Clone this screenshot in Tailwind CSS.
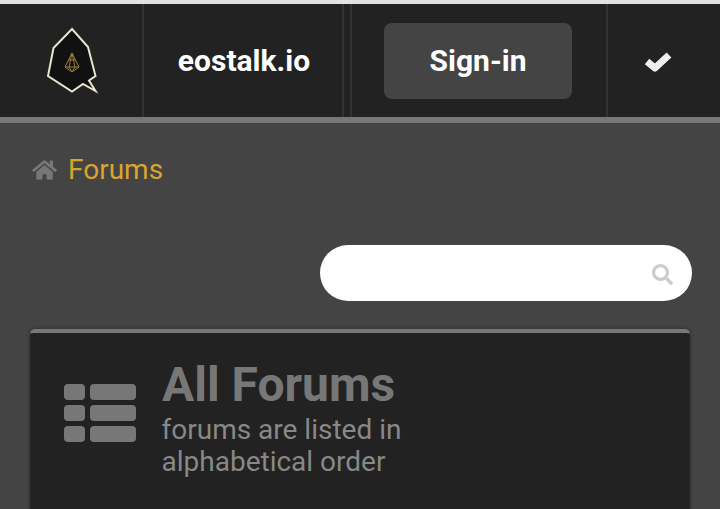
<!DOCTYPE html>
<html lang="en">
  <head>
    <meta charset="UTF-8" />
    <meta name="viewport" content="width=device-width, initial-scale=1.0" />
    <title>eostalk.io</title>
    <script src="https://cdn.jsdelivr.net/npm/@tailwindcss/browser@4"></script>
  </head>
  <body class="bg-[#444444] h-[509px] overflow-hidden font-['Roboto',sans-serif]">
    <!-- Header -->
    <header class="border-t-[4px] border-t-[#e2e2e2] bg-[#222222] border-b-[6px] border-b-[#777777] h-[123px] flex">
      <div class="w-[144px] border-r-2 border-r-[#333333] flex items-center justify-center">
        <svg class="w-[60px] h-[71px]" viewBox="41 25 60 71">
          <path d="M72 29 L88 47 L95.5 76 L89 80.5 L95.5 91 L83 84 L72 91.5 L48 76 L53.500 48 Z" fill="#111111" stroke="#e8e4d0" stroke-width="2" />
          <path d="M72 53 L79 67 L72 72 L65 67 Z M72 53 L69 67 L72 72 L75 67 L72 53 M68 60 L76 60 M65 67 L79 67" fill="none" stroke="#9c7f3a" stroke-width="1" />
        </svg>
      </div>
      <div class="w-[200px] pl-[2px] flex items-center justify-center text-white font-bold text-[30px] border-r-2 border-r-[#333333]">eostalk.io</div>
      <div class="w-[258px] ml-[6px] pr-[2px] border-l-2 border-l-[#333333] border-r-2 border-r-[#333333] flex items-center justify-center">
        <button class="w-[188px] h-[76px] bg-[#444444] rounded-[8px] text-white font-bold text-[30px]">Sign-in</button>
      </div>
      <div class="flex-1 flex items-center pl-[36px]">
        <svg class="w-[28px] h-[22px]" viewBox="0 0 28 22" fill="none">
          <path d="M3 11.500 L11 18 L25 5" stroke="#eeeeee" stroke-width="7" stroke-linejoin="round" />
        </svg>
      </div>
    </header>

    <!-- Breadcrumb -->
    <div class="flex items-center pl-[32px] h-[32px] mt-[31px]">
      <svg class="w-[25px] h-[22px]" viewBox="0 0 576 512" fill="#777777">
        <path d="M280.4 148.3L96 300.1V464a16 16 0 0 0 16 16l112.1-.3a16 16 0 0 0 15.9-16V368a16 16 0 0 1 16-16h64a16 16 0 0 1 16 16v95.6a16 16 0 0 0 16 16.1L464 480a16 16 0 0 0 16-16V300L295.7 148.3a12.2 12.2 0 0 0-15.3 0zM571.6 251.5L488 182.6V44.1a12 12 0 0 0-12-12h-56a12 12 0 0 0-12 12v72.6L318.5 43a48 48 0 0 0-61 0L4.3 251.5a12 12 0 0 0-1.6 16.9l25.5 31A12 12 0 0 0 45.2 301l235.2-193.7a12.2 12.2 0 0 1 15.3 0L530.9 301a12 12 0 0 0 16.9-1.6l25.5-31a12 12 0 0 0-1.7-16.9z" />
      </svg>
      <a class="ml-[11px] text-[#daa52e] text-[28px]">Forums</a>
    </div>

    <!-- Search -->
    <div class="flex justify-end pr-[28px] mt-[59px]">
      <div class="w-[372px] h-[56px] bg-white rounded-[28px] flex items-center justify-end pr-[19px]">
        <svg class="w-[21px] h-[21px] mt-[2px]" viewBox="0 0 512 512" fill="#cccccc">
          <path d="M505 442.7L405.3 343c-4.5-4.5-10.6-7-17-7H372c27.6-35.3 44-79.7 44-128C416 93.1 322.9 0 208 0S0 93.1 0 208s93.1 208 208 208c48.3 0 92.7-16.4 128-44v16.3c0 6.4 2.5 12.5 7 17l99.7 99.7c9.4 9.4 24.6 9.4 33.9 0l28.3-28.3c9.4-9.4 9.4-24.6.1-34zM208 336c-70.7 0-128-57.2-128-128 0-70.7 57.2-128 128-128 70.7 0 128 57.2 128 128 0 70.7-57.2 128-128 128z" />
        </svg>
      </div>
    </div>

    <!-- Card -->
    <section class="mx-[30px] mt-[28px] h-[200px] bg-[#222222] border-t-[4px] border-t-[#777777] rounded-t-[5px] shadow-[0_0_4px_rgba(0,0,0,0.35)] flex pl-[34px]">
      <div class="grid grid-cols-[21px_46px] grid-rows-[16px_16px_16px] gap-x-[5px] gap-y-[5px] mt-[51px] h-fit">
        <div class="bg-[#777777] rounded-[4px]"></div>
        <div class="bg-[#777777] rounded-[4px]"></div>
        <div class="bg-[#777777] rounded-[4px]"></div>
        <div class="bg-[#777777] rounded-[4px]"></div>
        <div class="bg-[#777777] rounded-[4px]"></div>
        <div class="bg-[#777777] rounded-[4px]"></div>
      </div>
      <div class="ml-[26px] mt-[27px]">
        <h1 class="text-[#777777] font-bold text-[48px] leading-[50px]">All Forums</h1>
        <p class="text-[#888888] text-[28px] leading-[32px] w-[300px] mt-[4px] -ml-[0.5px]">forums are listed in alphabetical order</p>
      </div>
    </section>
  </body>
</html>
